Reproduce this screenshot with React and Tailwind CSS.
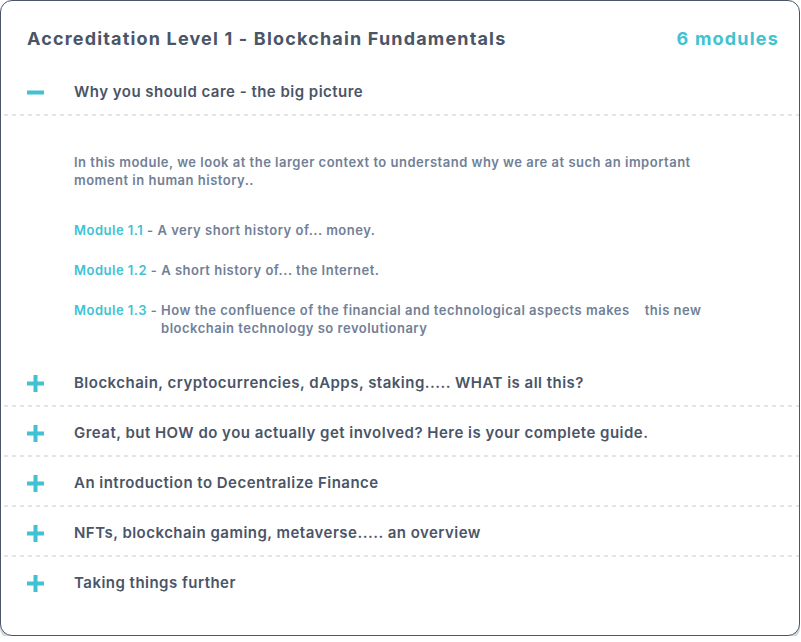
import React, { useState } from 'react';

const modules = [
  {
    title: 'Why you should care - the big picture',
    intro:
      'In this module, we look at the larger context to understand why we are at such an important moment in human history..',
    items: [
      { label: 'Module 1.1', text: 'A very short history of... money.' },
      { label: 'Module 1.2', text: 'A short history of... the Internet.' },
      {
        label: 'Module 1.3',
        text: 'How the confluence of the financial and technological aspects makes\u00a0\u00a0\u00a0 this new blockchain technology so revolutionary',
      },
    ],
  },
  { title: 'Blockchain, cryptocurrencies, dApps, staking..... WHAT is all this?' },
  { title: 'Great, but HOW do you actually get involved? Here is your complete guide.' },
  { title: 'An introduction to Decentralize Finance' },
  { title: 'NFTs, blockchain gaming, metaverse..... an overview' },
  { title: 'Taking things further' },
];

function ToggleIcon({ open }) {
  return (
    <svg width="17" height="17" viewBox="0 0 17 17" className="shrink-0">
      <rect x="0" y="6.5" width="17" height="4" fill="#40c2d2" />
      {!open && <rect x="6.5" y="0" width="4" height="17" fill="#40c2d2" />}
    </svg>
  );
}

export default function App() {
  const [openIdx, setOpenIdx] = useState(0);

  return (
    <div className="w-[800px] bg-white" style={{ fontFamily: 'Inter, "Noto Sans", sans-serif' }}>
      <div className="w-[800px] rounded-[12px] border border-[#4a5568] bg-white shadow-[0_4px_0_#d4d7dc] pb-[28px]">
        {/* header */}
        <div className="flex items-center justify-between pl-[26px] pr-[20px] pt-[24px] pb-[13px]">
          <h1 className="text-[18px] leading-[28px] font-bold tracking-[1.17px] text-[#4a5568]">
            Accreditation Level 1 - Blockchain Fundamentals
          </h1>
          <span className="text-[18px] leading-[28px] font-bold tracking-[1.2px] text-[#40c2d2]">6 modules</span>
        </div>

        {modules.map((m, i) => {
          const open = openIdx === i;
          const last = i === modules.length - 1;
          return (
            <div key={i}>
              <button
                onClick={() => setOpenIdx(open ? -1 : i)}
                className={`flex h-[50px] w-full items-center gap-[30px] pl-[26px] pt-[2px] text-left ${
                  last
                    ? ''
                    : 'bg-[linear-gradient(to_right,#e3e5e9_50%,transparent_50%)] bg-[length:8px_2px] bg-bottom bg-repeat-x'
                }`}
              >
                <ToggleIcon open={open} />
                <span className="text-[15px] font-semibold tracking-[0.48px] text-[#4a5568]">{m.title}</span>
              </button>
              {open && m.intro && (
                <div className="pl-[73px] pr-[74px] pt-[37px] pb-[20px] text-[13px] font-semibold tracking-[0.5px] text-[#718096]">
                  <p className="leading-[18px]">{m.intro}</p>
                  <div className="mt-[32px] flex flex-col gap-[22px]">
                    {m.items.map((it) => (
                      <div key={it.label} className="flex leading-[18px]">
                        <span className="shrink-0 whitespace-pre">
                          <span className="text-[#40c2d2]">{it.label}</span> -{' '}
                        </span>
                        <span>{it.text}</span>
                      </div>
                    ))}
                  </div>
                </div>
              )}
            </div>
          );
        })}
      </div>
    </div>
  );
}
